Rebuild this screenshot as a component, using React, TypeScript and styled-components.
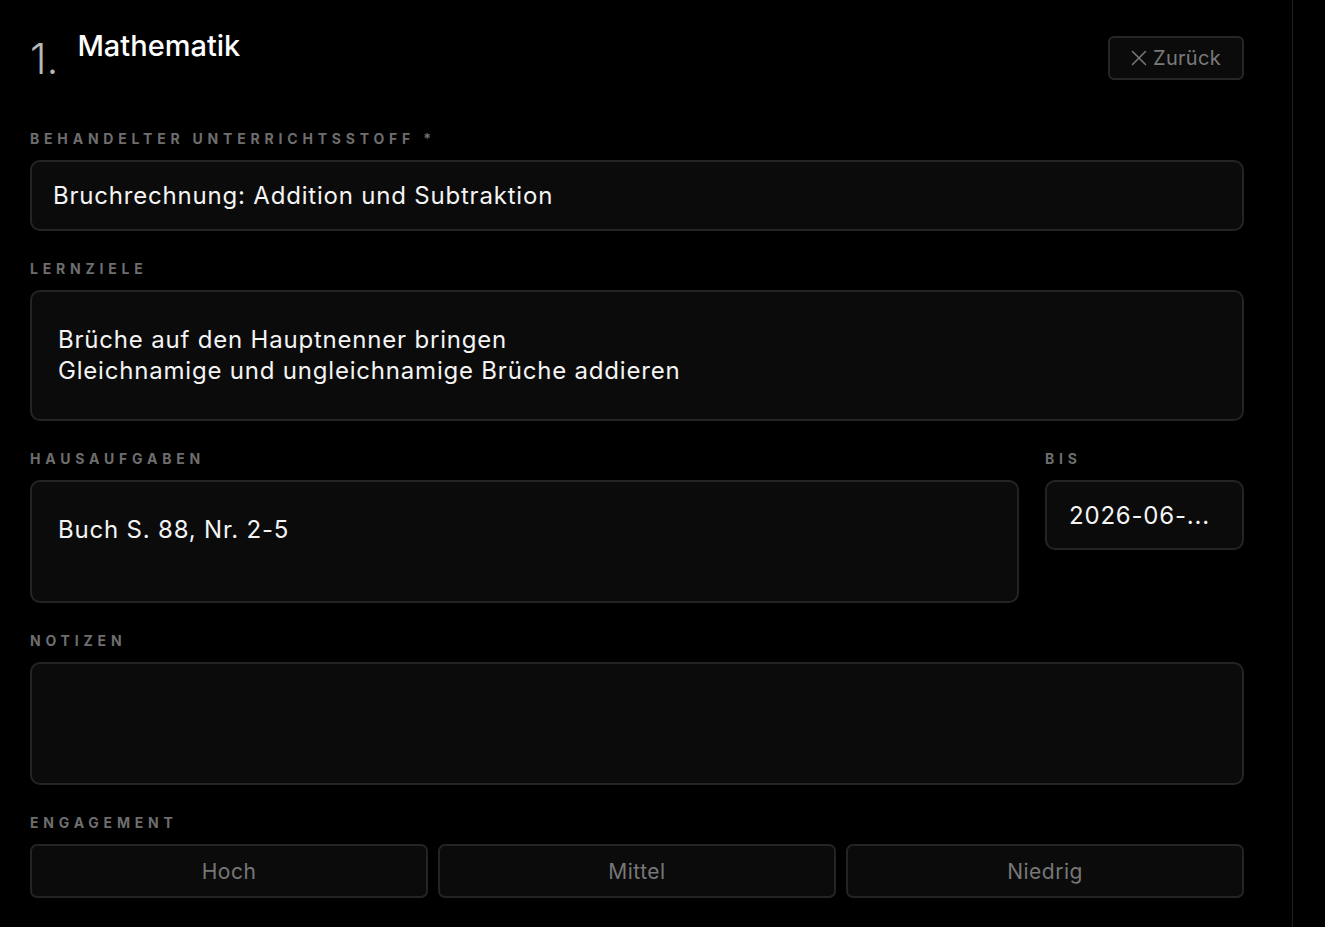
import styled, { createGlobalStyle } from 'styled-components';

const GlobalStyle = createGlobalStyle`
  html, body {
    margin: 0;
    padding: 0;
    background: #000;
    font-family: Inter, "Noto Sans", sans-serif;
    -webkit-font-smoothing: antialiased;
  }
`;

const Shell = styled.div`
  display: flex;
  min-height: 927px;
  background: #000;
`;

const Main = styled.main`
  box-sizing: border-box;
  width: 1293px;
  padding: 28px 48px 30px 30px;
  border-right: 1px solid #1f1f1f;
  display: flex;
  flex-direction: column;
`;

const Header = styled.header`
  display: flex;
  justify-content: space-between;
  align-items: flex-start;
  height: 103px;
`;

const TitleGroup = styled.div`
  display: flex;
  align-items: flex-start;
  gap: 19px;
`;

const Number = styled.span`
  font-size: 42px;
  font-weight: 300;
  line-height: 1;
  color: #b8b8b8;
  margin-top: 10px;
`;

const Title = styled.h1`
  margin: 0;
  font-size: 29px;
  font-weight: 500;
  line-height: 36px;
  color: #fff;
`;

const BackButton = styled.button`
  box-sizing: border-box;
  margin-top: 8px;
  height: 44px;
  padding: 0 21px;
  display: flex;
  align-items: center;
  gap: 6px;
  background: #0b0b0b;
  border: 2px solid #262626;
  border-radius: 6px;
  color: #7a7a7a;
  font-family: inherit;
  font-size: 20px;
  letter-spacing: 0.3px;
`;

const Field = styled.div<{ $grow?: boolean; $width?: number }>`
  display: flex;
  flex-direction: column;
  gap: 13px;
  margin-bottom: 30px;
  ${({ $grow }) => ($grow ? 'flex: 1;' : '')}
  ${({ $width }) => ($width ? `width: ${$width}px;` : '')}
`;

const Row = styled.div`
  display: flex;
  gap: 26px;
`;

const Label = styled.label`
  font-size: 14px;
  line-height: 16px;
  font-weight: 700;
  letter-spacing: 4.8px;
  color: #6e6e6e;
  text-transform: uppercase;
`;

const Box = styled.div<{ $height: number; $padX: number; $padTop?: number; $center?: boolean }>`
  box-sizing: border-box;
  height: ${({ $height }) => $height}px;
  padding: ${({ $padTop = 0 }) => $padTop}px ${({ $padX }) => $padX}px 0;
  display: flex;
  flex-direction: column;
  justify-content: ${({ $center }) => ($center ? 'center' : 'flex-start')};
  background: #0b0b0b;
  border: 2px solid #242424;
  border-radius: 10px;
  color: #f4f4f4;
  font-size: 24px;
  line-height: 31px;
  letter-spacing: 0.8px;
  white-space: nowrap;
  overflow: hidden;
`;

const Segments = styled.div`
  display: grid;
  grid-template-columns: repeat(3, 1fr);
  gap: 10px;
`;

const Segment = styled.button`
  box-sizing: border-box;
  height: 54px;
  background: #0b0b0b;
  border: 2px solid #242424;
  border-radius: 7px;
  color: #777;
  font-family: inherit;
  font-size: 21px;
  letter-spacing: 0.5px;
`;

const XIcon = () => (
  <svg width="16" height="16" viewBox="0 0 16 16" fill="none" stroke="currentColor" strokeWidth="1.5" strokeLinecap="round">
    <path d="M1.5 1.5l13 13M14.5 1.5l-13 13" />
  </svg>
);

export default function App() {
  return (
    <Shell>
      <GlobalStyle />
      <Main>
        <Header>
          <TitleGroup>
            <Number>1.</Number>
            <Title>Mathematik</Title>
          </TitleGroup>
          <BackButton>
            <XIcon />
            Zurück
          </BackButton>
        </Header>

        <Field>
          <Label>Behandelter Unterrichtsstoff *</Label>
          <Box $height={71} $padX={21} $center>
            Bruchrechnung: Addition und Subtraktion
          </Box>
        </Field>

        <Field>
          <Label>Lernziele</Label>
          <Box $height={131} $padX={26} $padTop={32}>
            <span>Brüche auf den Hauptnenner bringen</span>
            <span>Gleichnamige und ungleichnamige Brüche addieren</span>
          </Box>
        </Field>

        <Row>
          <Field $grow>
            <Label>Hausaufgaben</Label>
            <Box $height={123} $padX={26} $padTop={32}>
              Buch S. 88, Nr. 2-5
            </Box>
          </Field>
          <Field $width={199}>
            <Label>Bis</Label>
            <Box $height={70} $padX={22} $center>
              2026-06-...
            </Box>
          </Field>
        </Row>

        <Field>
          <Label>Notizen</Label>
          <Box $height={123} $padX={26} $padTop={32} />
        </Field>

        <Field>
          <Label>Engagement</Label>
          <Segments>
            <Segment>Hoch</Segment>
            <Segment>Mittel</Segment>
            <Segment>Niedrig</Segment>
          </Segments>
        </Field>
      </Main>
    </Shell>
  );
}
